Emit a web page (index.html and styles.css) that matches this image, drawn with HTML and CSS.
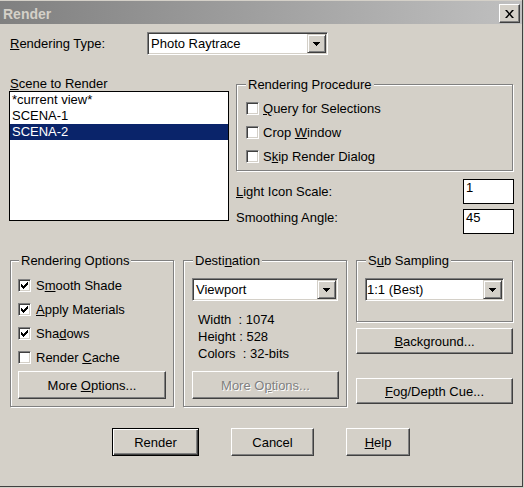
FILE: index.html
```html
<!DOCTYPE html>
<html>
<head>
<meta charset="utf-8">
<title>Render</title>
<link rel="stylesheet" href="styles.css">
</head>
<body>
<div class="window">
  <div class="titlebar">
    <span class="title">Render</span>
    <span class="close-btn"><svg width="9" height="8" viewBox="0 0 9 8"><path d="M0 0h2l2.5 3 2.5-3h2l-3.5 4 3.5 4h-2l-2.5-3-2.5 3h-2l3.5-4z" fill="#000"/></svg></span>
  </div>
  <div class="content">
    <div class="type-row">
      <span class="type-label"><u>R</u>endering Type:</span>
      <div class="select select-type">
        <span class="select-text">Photo Raytrace</span>
        <span class="drop-btn"><svg width="7" height="4" viewBox="0 0 7 4" shape-rendering="crispEdges"><path d="M0 0h7v1h-1v1h-1v1h-1v1h-1v-1h-1v-1h-1v-1h-1z" fill="#000"/></svg></span>
      </div>
    </div>

    <div class="main">
      <div class="scene-col">
        <div class="scene-label"><u>S</u>cene to Render</div>
        <div class="listbox">
          <div class="list-item">*current view*</div>
          <div class="list-item">SCENA-1</div>
          <div class="list-item selected">SCENA-2</div>
        </div>
      </div>
      <div class="proc-col">
        <div class="group group-proc">
          <div class="group-title">Rendering Procedure</div>
          <div class="checks checks-proc">
            <div class="check-row"><span class="checkbox"></span><span><u>Q</u>uery for Selections</span></div>
            <div class="check-row"><span class="checkbox"></span><span>Crop <u>W</u>indow</span></div>
            <div class="check-row"><span class="checkbox"></span><span>S<u>k</u>ip Render Dialog</span></div>
          </div>
        </div>
        <div class="field-row field-row-first">
          <span class="field-label field-label-first"><u>L</u>ight Icon Scale:</span>
          <div class="edit">1</div>
        </div>
        <div class="field-row">
          <span class="field-label field-label-second">Smoothin<u>g</u> Angle:</span>
          <div class="edit">45</div>
        </div>
      </div>
    </div>

    <div class="bottom">
      <div class="group group-opts">
        <div class="group-title">Rendering Options</div>
        <div class="checks checks-opts">
          <div class="check-row"><span class="checkbox"><svg width="7" height="7" viewBox="0 0 7 7" shape-rendering="crispEdges"><path d="M6 0h1v1h-1zM5 1h2v1h-2zM0 2h1v1h-1zM4 2h3v1h-3zM0 3h2v1h-2zM3 3h3v1h-3zM0 4h5v1h-5zM1 5h3v1h-3zM2 6h1v1h-1z" fill="#000"/></svg></span><span>S<u>m</u>ooth Shade</span></div>
          <div class="check-row"><span class="checkbox"><svg width="7" height="7" viewBox="0 0 7 7" shape-rendering="crispEdges"><path d="M6 0h1v1h-1zM5 1h2v1h-2zM0 2h1v1h-1zM4 2h3v1h-3zM0 3h2v1h-2zM3 3h3v1h-3zM0 4h5v1h-5zM1 5h3v1h-3zM2 6h1v1h-1z" fill="#000"/></svg></span><span><u>A</u>pply Materials</span></div>
          <div class="check-row"><span class="checkbox"><svg width="7" height="7" viewBox="0 0 7 7" shape-rendering="crispEdges"><path d="M6 0h1v1h-1zM5 1h2v1h-2zM0 2h1v1h-1zM4 2h3v1h-3zM0 3h2v1h-2zM3 3h3v1h-3zM0 4h5v1h-5zM1 5h3v1h-3zM2 6h1v1h-1z" fill="#000"/></svg></span><span>Sha<u>d</u>ows</span></div>
          <div class="check-row"><span class="checkbox"></span><span>Render <u>C</u>ache</span></div>
        </div>
        <div class="btn btn-more-opts"><span>More <u>O</u>ptions...</span></div>
      </div>

      <div class="group group-dest">
        <div class="group-title">Desti<u>n</u>ation</div>
        <div class="select select-dest">
          <span class="select-text">Viewport</span>
          <span class="drop-btn"><svg width="7" height="4" viewBox="0 0 7 4" shape-rendering="crispEdges"><path d="M0 0h7v1h-1v1h-1v1h-1v1h-1v-1h-1v-1h-1v-1h-1z" fill="#000"/></svg></span>
        </div>
        <div class="dest-info">
          <div class="dest-line">Width  : 1074</div>
          <div class="dest-line">Height : 528</div>
          <div class="dest-line">Colors  : 32-bits</div>
        </div>
        <div class="btn btn-disabled btn-more-dest"><span>More O<u>p</u>tions...</span></div>
      </div>

      <div class="right-stack">
        <div class="group group-sub">
          <div class="group-title">S<u>u</u>b Sampling</div>
          <div class="select select-sub">
            <span class="select-text">1:1 (Best)</span>
            <span class="drop-btn"><svg width="7" height="4" viewBox="0 0 7 4" shape-rendering="crispEdges"><path d="M0 0h7v1h-1v1h-1v1h-1v1h-1v-1h-1v-1h-1v-1h-1z" fill="#000"/></svg></span>
          </div>
        </div>
        <div class="btn btn-wide btn-background"><span><u>B</u>ackground...</span></div>
        <div class="btn btn-wide btn-fog"><span><u>F</u>og/Depth Cue...</span></div>
      </div>
    </div>

    <div class="buttons">
      <div class="btn btn-default btn-render"><span>Render</span></div>
      <div class="btn btn-cancel"><span>Cancel</span></div>
      <div class="btn btn-help"><span><u>H</u>elp</span></div>
    </div>
  </div>
</div>
</body>
</html>
```

FILE: styles.css
```css
* { box-sizing: border-box; }

html, body {
  margin: 0;
  padding: 0;
}

body {
  width: 524px;
  height: 488px;
  overflow: hidden;
  background: #d4d0c8;
  font-family: "Liberation Sans", Arial, sans-serif;
  font-size: 13px;
  line-height: 15px;
  color: #000;
}

.window {
  width: 523px;
  height: 487px;
  padding-top: 1px;
  border-right: 1px solid #404040;
  border-bottom: 1px solid #404040;
}

/* Title bar */
.titlebar {
  height: 23px;
  display: flex;
  align-items: flex-start;
  padding: 3px 0 0 3px;
  background: linear-gradient(to right, #808080, #c0c0c0);
}

.title {
  margin-top: 2px;
  font-weight: bold;
  font-size: 14px;
  line-height: 16px;
  color: #d4d0c8;
}

.close-btn {
  margin-left: auto;
  margin-right: 2px;
  width: 21px;
  height: 19px;
  display: flex;
  align-items: center;
  justify-content: center;
  background: #d4d0c8;
  border: 1px solid;
  border-color: #fff #404040 #404040 #fff;
  box-shadow: inset -1px -1px #808080;
}

/* Rendering type row */
.type-row {
  display: flex;
  align-items: center;
  height: 23px;
  margin-top: 8px;
  padding-left: 9px;
}

.type-label {
  width: 138px;
  padding-left: 1px;
}

/* Combo box */
.select {
  display: flex;
  height: 23px;
  padding: 1px;
  background: #fff;
  border: 1px solid;
  border-color: #808080 #fff #fff #808080;
  box-shadow: inset 1px 1px #404040, inset -1px -1px #d4d0c8;
}

.select-text {
  flex: 1;
  display: flex;
  align-items: center;
  padding-left: 2px;
  white-space: nowrap;
}

.drop-btn {
  width: 19px;
  display: flex;
  align-items: center;
  justify-content: center;
  background: #d4d0c8;
  border: 1px solid;
  border-color: #d4d0c8 #404040 #404040 #d4d0c8;
  box-shadow: inset 1px 1px #fff, inset -1px -1px #808080;
}

.select-type { width: 181px; }
.select-dest { width: 146px; margin: 10px 0 0 8px; }
.select-sub { width: 139px; margin: 10px 0 0 8px; }
.select-sub .select-text { padding-left: 0; }

/* Main area */
.main {
  display: flex;
  align-items: flex-start;
  gap: 7px;
  margin-top: 21px;
  padding-left: 9px;
}

.scene-col { width: 220px; }

.scene-label {
  height: 15px;
  padding-left: 1px;
}

.listbox {
  height: 130px;
  background: #fff;
  border: 1px solid #000;
}

.list-item {
  height: 16px;
  line-height: 16px;
  padding-left: 2px;
}

.list-item.selected {
  background: #0a246a;
  color: #fff;
}

.proc-col {
  width: 278px;
  margin-top: 8px;
}

/* Group frames */
.group {
  border: 1px solid #808080;
  box-shadow: inset 1px 1px #fff, 1px 1px #fff;
}

.group-title {
  width: fit-content;
  margin: -8px 0 0 9px;
  padding: 0 2px;
  background: #d4d0c8;
  line-height: 15px;
}

.group-opts .group-title { margin-left: 8px; }

.group-proc { width: 277px; height: 87px; }

.checks {
  display: flex;
  flex-direction: column;
  gap: 9px;
}

.checks-proc { margin-top: 9px; padding-left: 9px; }
.checks-opts { margin-top: 10px; padding-left: 7px; }

.check-row {
  display: flex;
  align-items: center;
  gap: 4px;
  height: 15px;
}

.checks-opts .check-row { gap: 5px; }

.checkbox {
  flex: none;
  width: 13px;
  height: 13px;
  display: flex;
  align-items: center;
  justify-content: center;
  background: #fff;
  border: 1px solid;
  border-color: #808080 #fff #fff #808080;
  box-shadow: inset 1px 1px #404040, inset -1px -1px #d4d0c8;
}

/* Edit fields */
.field-row {
  display: flex;
  justify-content: space-between;
  align-items: flex-start;
  height: 25px;
  margin-top: 5px;
}

.field-row-first { margin-top: 8px; }
.field-label-first { margin-top: 5px; }
.field-label-second { margin-top: 1px; }

.edit {
  width: 51px;
  height: 25px;
  padding: 0 2px;
  background: #fff;
  border: 1px solid #000;
  line-height: 15px;
}

/* Bottom groups */
.bottom {
  display: flex;
  align-items: flex-start;
  gap: 9px;
  margin-top: 26px;
  padding-left: 10px;
}

.group-opts { width: 164px; height: 147px; }
.group-dest { width: 164px; height: 147px; }

.dest-info {
  margin: 10px 0 0 14px;
  line-height: 17px;
}

.dest-line { white-space: pre; }

.right-stack { width: 157px; }
.group-sub { width: 157px; height: 62px; }

/* Buttons */
.btn {
  display: flex;
  align-items: center;
  justify-content: center;
  background: #d4d0c8;
  border: 1px solid;
  border-color: #fff #404040 #404040 #fff;
  box-shadow: inset -1px -1px #808080;
  white-space: nowrap;
}

.btn-default {
  border: 1px solid #000;
  box-shadow: inset 1px 1px #fff, inset -1px -1px #404040, inset -2px -2px #808080;
}

.btn-disabled {
  color: #808080;
  text-shadow: 1px 1px 0 #fff;
}

.btn-more-opts { width: 148px; height: 28px; margin: 6px 0 0 7px; }
.btn-more-dest { width: 147px; height: 28px; margin: 9px 0 0 8px; }

.btn-wide { width: 157px; height: 26px; }
.btn-background { margin-top: 6px; }
.btn-fog { margin-top: 24px; }

.buttons {
  display: flex;
  justify-content: center;
  gap: 32px;
  margin-top: 21px;
}

.btn-render { width: 87px; height: 28px; }
.btn-cancel { width: 83px; height: 28px; }
.btn-help { width: 64px; height: 28px; }
```
